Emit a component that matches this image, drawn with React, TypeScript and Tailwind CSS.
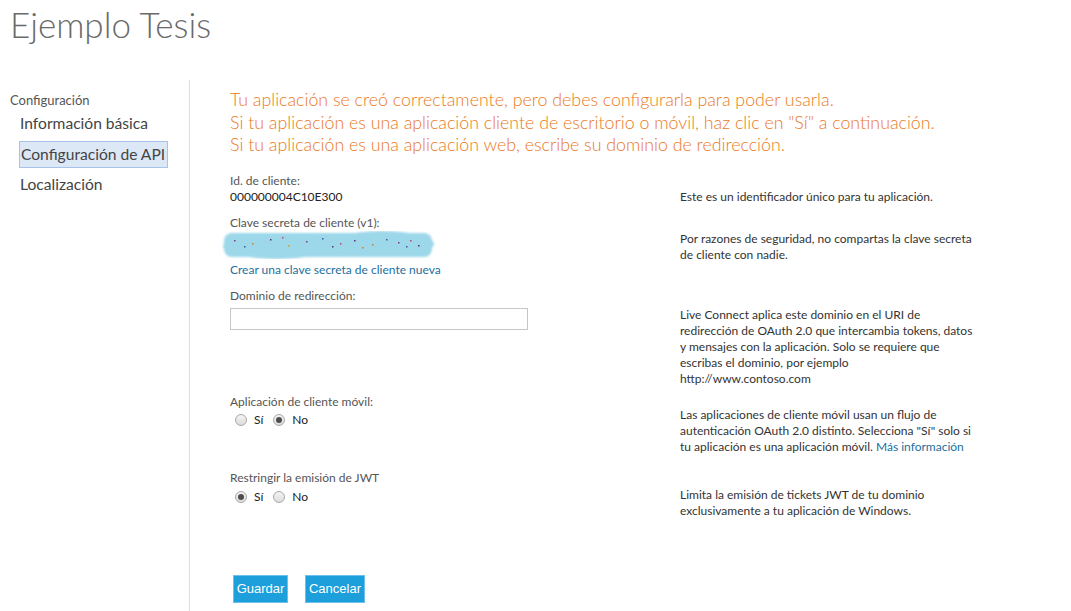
import React from "react";

function Radio({ checked }: { checked: boolean }) {
  return (
    <span className="relative inline-flex h-[12px] w-[12px] items-center justify-center rounded-full border border-[#a9a9a9] bg-gradient-to-b from-[#f4f4f4] to-[#dcdcdc]">
      {checked && <span className="h-[6px] w-[6px] rounded-full bg-[#4d4d4d]" />}
    </span>
  );
}

function RadioPair({ yes }: { yes: boolean }) {
  return (
    <div className="flex h-[18px] items-center pl-[5px] text-[12px] text-[#222]">
      <Radio checked={yes} />
      <span className="ml-[7px]">Sí</span>
      <span className="ml-[10px]" />
      <Radio checked={!yes} />
      <span className="ml-[7px]">No</span>
    </div>
  );
}

function Smudge() {
  const dots = [
    [12, 9, "#7a3b8f"], [30, 12, "#c0822b"], [48, 8, "#5a2d7a"], [66, 14, "#d09a2a"],
    [84, 10, "#7a3b8f"], [100, 7, "#3d5a9a"], [118, 12, "#b34a6a"], [132, 9, "#5a2d7a"],
    [150, 13, "#c0822b"], [164, 8, "#3d5a9a"], [176, 11, "#7a3b8f"], [188, 9, "#b34a6a"],
    [196, 14, "#5a2d7a"], [140, 16, "#c0822b"], [22, 15, "#3d5a9a"], [60, 6, "#b34a6a"],
    [110, 15, "#5a2d7a"], [184, 15, "#3d5a9a"],
  ] as const;
  return (
    <svg width="214" height="28" viewBox="0 0 214 28" className="block">
      <defs>
        <filter id="bl" x="-10%" y="-30%" width="120%" height="160%">
          <feGaussianBlur stdDeviation="1" />
        </filter>
      </defs>
      <g filter="url(#bl)" fill="#9dd7ea">
        <rect x="2" y="2" width="208" height="24" rx="8" />
        <ellipse cx="55" cy="15" rx="54" ry="13" />
        <ellipse cx="160" cy="13" rx="52" ry="13" />
      </g>
      {dots.map(([x, y, c], i) => (
        <rect key={i} x={x} y={y} width="1.5" height="1.5" fill={c} />
      ))}
    </svg>
  );
}

export default function App() {
  return (
    <div
      className="h-[611px] w-full overflow-hidden bg-white"
      style={{ fontFamily: "Lato, 'Open Sans', sans-serif" }}
    >
      <div className="h-[80px] pl-[10px] pt-[2px]">
        <h1 className="text-[35px] font-light leading-[44px] text-[#6a6a6a]">Ejemplo Tesis</h1>
      </div>
      <div className="flex">
        <aside className="h-[531px] w-[190px] shrink-0 border-r border-[#dedede] pt-[12px]">
          <div className="pl-[10px] text-[13px] leading-[16px] text-[#555]">Configuración</div>
          <nav className="mt-[2px] flex flex-col pl-[19px] text-[15.6px] text-[#444]">
            <div className="flex h-[27px] items-center px-[1px]">Información básica</div>
            <div className="mt-[4px] flex h-[27px] w-[149px] items-center whitespace-nowrap border border-[#a9c3e8] bg-[#dde8f7] px-[1px]">
              Configuración de API
            </div>
            <div className="mt-[3px] flex h-[27px] items-center px-[1px]">Localización</div>
          </nav>
        </aside>
        <main className="flex-1 pl-[40px] pt-[8px]">
          <div className="text-[17.8px] font-light leading-[22.5px] text-[#ea7a24]">
            <p>Tu aplicación se creó correctamente, pero debes configurarla para poder usarla.</p>
            <p>Si tu aplicación es una aplicación cliente de escritorio o móvil, haz clic en "Sí" a continuación.</p>
            <p>Si tu aplicación es una aplicación web, escribe su dominio de redirección.</p>
          </div>

          <div className="mt-[17px] text-[12px] leading-[16px]">
            {/* Id de cliente */}
            <div className="flex">
              <div className="w-[450px]">
                <div className="text-[#555]">Id. de cliente:</div>
                <div className="text-[#222]">000000004C10E300</div>
              </div>
              <div className="w-[300px] pt-[16px] text-[#333]">
                Este es un identificador único para tu aplicación.
              </div>
            </div>

            {/* Clave secreta */}
            <div className="mt-[10px] flex">
              <div className="w-[450px]">
                <div className="text-[#555]">Clave secreta de cliente (v1):</div>
                <div className="-ml-[8px]">
                  <Smudge />
                </div>
                <div className="mt-[3px] text-[#22709f]">Crear una clave secreta de cliente nueva</div>
              </div>
              <div className="w-[300px] pt-[16px] text-[#333]">
                Por razones de seguridad, no compartas la clave secreta de cliente con nadie.
              </div>
            </div>

            {/* Dominio */}
            <div className="mt-[10px] flex">
              <div className="w-[450px]">
                <div className="text-[#555]">Dominio de redirección:</div>
                <input
                  type="text"
                  className="mt-[4px] block h-[22px] w-[298px] border border-[#c6c6c6] bg-white outline-none"
                />
              </div>
              <div className="w-[300px] pt-[19px] text-[#333]">
                Live Connect aplica este dominio en el URI de redirección de OAuth 2.0 que intercambia tokens, datos y
                mensajes con la aplicación. Solo se requiere que escribas el dominio, por ejemplo http://www.contoso.com
              </div>
            </div>

            {/* Cliente móvil */}
            <div className="mt-[7px] flex">
              <div className="w-[450px]">
                <div className="text-[#555]">Aplicación de cliente móvil:</div>
                <div className="mt-[1px]">
                  <RadioPair yes={false} />
                </div>
              </div>
              <div className="w-[300px] pt-[13px] text-[#333]">
                <p>Las aplicaciones de cliente móvil usan un flujo de</p>
                <p>autenticación OAuth 2.0 distinto. Selecciona "Sí" solo si</p>
                <p>
                  tu aplicación es una aplicación móvil. <a className="text-[#22709f]">Más información</a>
                </p>
              </div>
            </div>

            {/* JWT */}
            <div className="mt-[15px] flex">
              <div className="w-[450px]">
                <div className="text-[#555]">Restringir la emisión de JWT</div>
                <div className="mt-[2px]">
                  <RadioPair yes={true} />
                </div>
              </div>
              <div className="w-[300px] pt-[17px] text-[#333]">
                Limita la emisión de tickets JWT de tu dominio exclusivamente a tu aplicación de Windows.
              </div>
            </div>
          </div>

          <div
            className="mt-[56px] flex gap-[17px] pl-[3px] text-[13px] text-white"
            style={{ fontFamily: "'Liberation Sans', Arial, sans-serif" }}
          >
            <button className="h-[28px] w-[55px] border border-[#6cc0ec] bg-[#1c9fdb]">Guardar</button>
            <button className="h-[28px] w-[60px] border border-[#6cc0ec] bg-[#1c9fdb]">Cancelar</button>
          </div>
        </main>
      </div>
    </div>
  );
}
